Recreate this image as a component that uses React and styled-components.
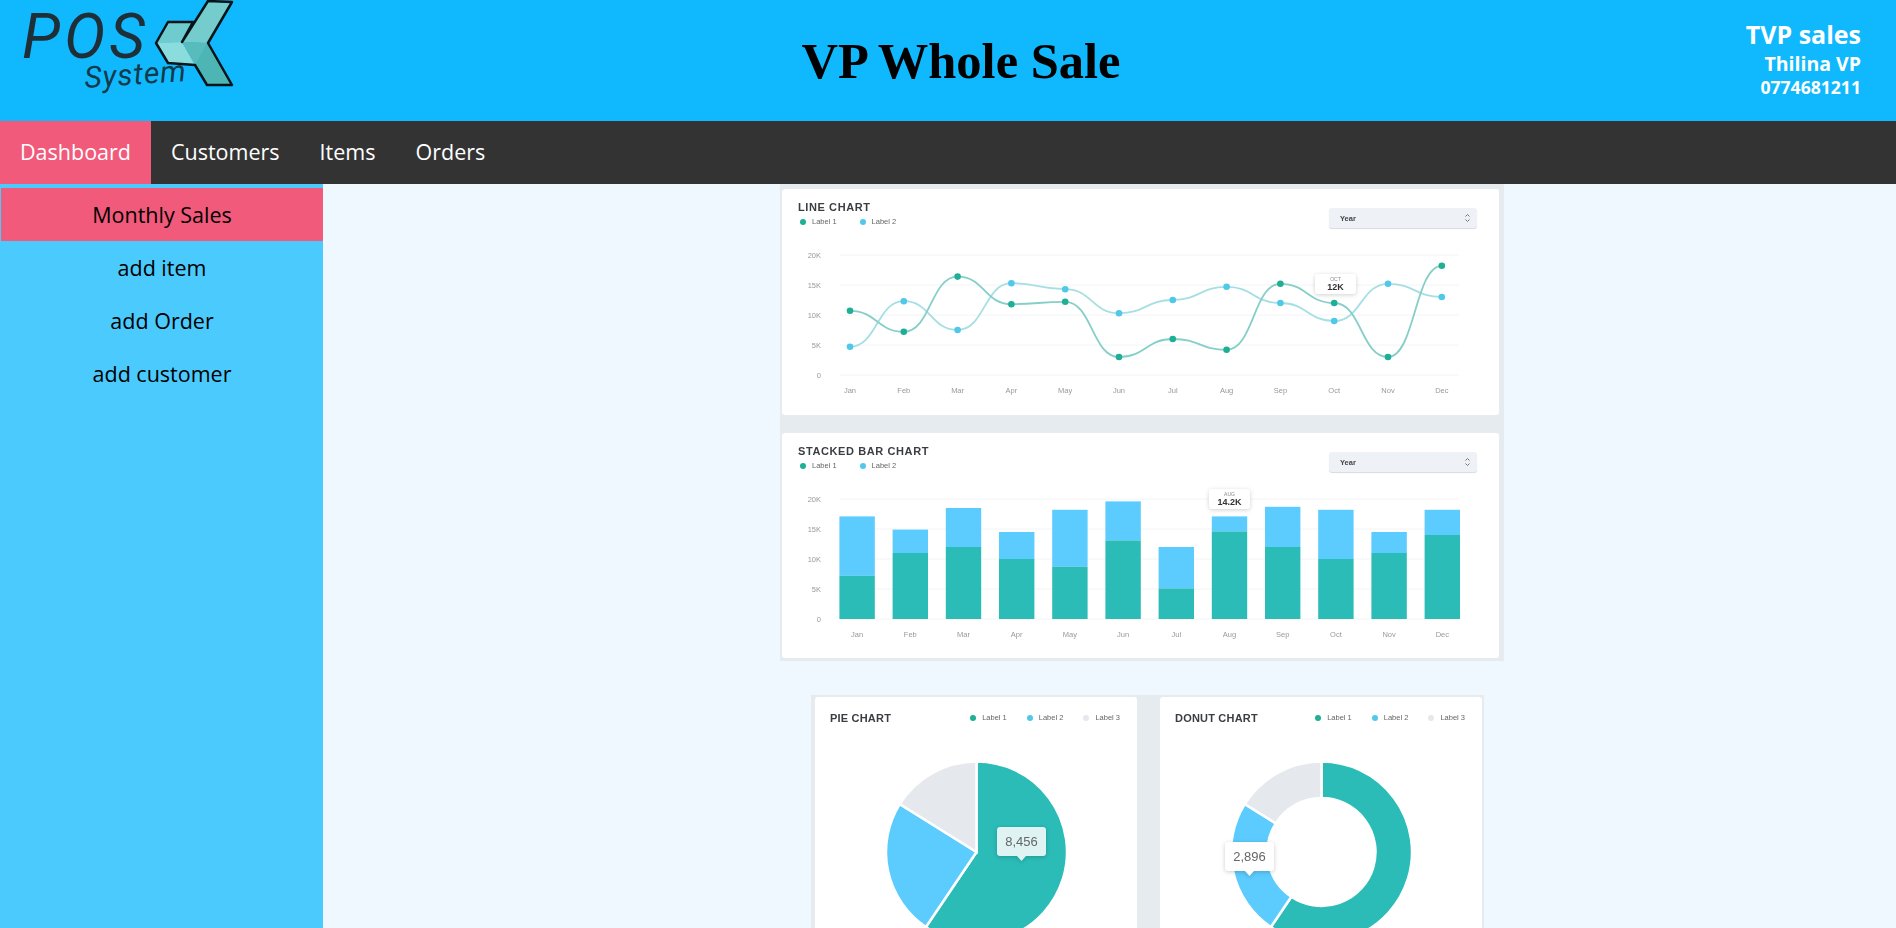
import React from 'react'
import styled, { createGlobalStyle } from 'styled-components'

const GlobalStyle = createGlobalStyle`
    html, body {
        margin: 0;
        height: 100%;
        overflow: hidden;
    }
    body {
        font-family: "Open Sans", "Noto Sans", sans-serif;
    }
`

const TEAL = '#2bbcb8'
const BLUE = '#5ccbfd'
const GREY = '#e5e8ec'
const DOT_TEAL = '#1fae96'
const DOT_BLUE = '#4fc8ea'
const MONTHS = ['Jan', 'Feb', 'Mar', 'Apr', 'May', 'Jun', 'Jul', 'Aug', 'Sep', 'Oct', 'Nov', 'Dec']
const TICKS = [0, 5, 10, 15, 20]

const lineOne = [10.7, 7.2, 16.4, 11.8, 12.2, 3, 6, 4.2, 15.2, 12, 3, 18.2]
const lineTwo = [4.7, 12.3, 7.5, 15.3, 14.3, 10.3, 12.5, 14.7, 12, 9, 15.2, 13]
const bars = [
    [7.2, 17.1], [11, 14.9], [12, 18.5], [10, 14.5], [8.7, 18.2], [13.1, 19.6],
    [5.1, 12], [14.6, 17.1], [12, 18.7], [10, 18.2], [11, 14.5], [14, 18.2],
]

const Page = styled.div`
    height: 100vh;
    display: flex;
    flex-direction: column;
    overflow: hidden;
`
const Header = styled.header`
    height: 121px;
    flex: none;
    background: #10b9fd;
    display: grid;
    grid-template-columns: 1fr auto 1fr;
    align-items: center;
`
const Logo = styled.svg`
    display: block;
    align-self: start;
`
const Title = styled.h1`
    margin: 0;
    padding-left: 26px;
    font-family: "Liberation Serif", serif;
    font-size: 50.5px;
    font-weight: 700;
    color: #000;
`
const Shop = styled.div`
    justify-self: end;
    padding: 0 35px 5px 0;
    color: #fff;
    font-weight: 700;
    text-align: right;
`
const ShopLine = styled.div`
    font-size: ${(p) => p.size}px;
    line-height: ${(p) => p.height}px;
`
const Nav = styled.nav`
    height: 63px;
    flex: none;
    background: #333;
    display: flex;
`
const NavItem = styled.a`
    display: flex;
    align-items: center;
    padding: 0 20px 2px;
    font-size: 21.5px;
    color: #fff;
    background: ${(p) => (p.$active ? '#f15a7b' : 'transparent')};
`
const Body = styled.div`
    flex: 1;
    min-height: 0;
    display: flex;
`
const Sidebar = styled.aside`
    width: 323px;
    flex: none;
    box-sizing: border-box;
    padding: 4px 0 0 1px;
    background: #4bcbfd;
`
const SideItem = styled.div`
    height: 53px;
    display: flex;
    align-items: center;
    justify-content: center;
    font-size: 21.5px;
    color: #000;
    background: ${(p) => (p.$active ? '#f15a7b' : 'transparent')};
`
const Main = styled.main`
    flex: 1;
    min-width: 0;
    padding-left: 457px;
    background: #f0f8ff;
    overflow: hidden;
`
const ChartStack = styled.div`
    width: 724px;
    box-sizing: border-box;
    padding: 5px 5px 3px 2px;
    display: flex;
    flex-direction: column;
    gap: 18px;
    background: #e6ebef;
`
const Card = styled.section`
    background: #fff;
    border-radius: 3px;
    height: ${(p) => p.height}px;
    overflow: hidden;
    filter: blur(0.6px);
`
const CardHead = styled.div`
    height: 51px;
    box-sizing: border-box;
    padding: 11px 22px 0 16px;
    display: flex;
    justify-content: space-between;
    align-items: flex-start;
`
const CardTitle = styled.div`
    font-family: "Liberation Sans", sans-serif;
    font-size: 11px;
    line-height: 14px;
    font-weight: 700;
    letter-spacing: ${(p) => (p.$wide ? '0.6px' : '0.2px')};
    color: #3a3d42;
`
const Legend = styled.div`
    display: flex;
    gap: ${(p) => p.gap}px;
    margin: ${(p) => p.top || 0}px 0 0 ${(p) => p.left || 0}px;
`
const LegendItem = styled.div`
    display: flex;
    align-items: center;
    gap: 6px;
    font-family: "Liberation Sans", sans-serif;
    font-size: 7.5px;
    line-height: 10px;
    color: #666;
`
const Dot = styled.i`
    width: 6px;
    height: 6px;
    border-radius: 50%;
    background: ${(p) => p.color};
`
const Select = styled.div`
    width: 148px;
    height: 20px;
    box-sizing: border-box;
    margin-top: 8px;
    padding: 0 7px 0 11px;
    display: flex;
    align-items: center;
    justify-content: space-between;
    background: #eef1f5;
    border-radius: 3px;
    box-shadow: 0 1px 1px #d5dade;
    font-family: "Liberation Sans", sans-serif;
    font-size: 7.5px;
    font-weight: 700;
    color: #444;
`
const Chevrons = styled.svg`
    display: block;
`
const ChartSvg = styled.svg`
    display: block;
    font-family: "Liberation Sans", sans-serif;
`
const PieRow = styled.div`
    width: 673px;
    box-sizing: border-box;
    margin: 34px 0 0 31px;
    padding: 2px 2px 0 4px;
    display: grid;
    grid-template-columns: 322px 322px;
    gap: 23px;
    background: #e6ebef;
`
const PieHead = styled.div`
    height: 45px;
    box-sizing: border-box;
    padding: 14px 17px 0 15px;
    display: flex;
    justify-content: space-between;
    align-items: flex-start;
`

const smoothPath = (pts) =>
    pts.reduce((d, [x, y], i) => {
        if (i === 0) return `M${x} ${y}`
        const [px, py] = pts[i - 1]
        const mid = (px + x) / 2
        return `${d} C${mid} ${py} ${mid} ${y} ${x} ${y}`
    }, '')

const polar = (cx, cy, r, deg) => {
    const a = ((deg - 90) * Math.PI) / 180
    return [cx + r * Math.cos(a), cy + r * Math.sin(a)]
}

const slicePath = (cx, cy, r, inner, from, to) => {
    const large = to - from > 180 ? 1 : 0
    const [x1, y1] = polar(cx, cy, r, from)
    const [x2, y2] = polar(cx, cy, r, to)
    if (!inner) return `M${cx} ${cy} L${x1} ${y1} A${r} ${r} 0 ${large} 1 ${x2} ${y2} Z`
    const [x3, y3] = polar(cx, cy, inner, to)
    const [x4, y4] = polar(cx, cy, inner, from)
    return `M${x1} ${y1} A${r} ${r} 0 ${large} 1 ${x2} ${y2} L${x3} ${y3} A${inner} ${inner} 0 ${large} 0 ${x4} ${y4} Z`
}

const Axis = ({ monthX }) => (
    <>
        {TICKS.map((t) => (
            <g key={t}>
                <line x1="58" x2="677" y1={135 - t * 6} y2={135 - t * 6} stroke="#f3f4f6" />
                <text x="39" y={138 - t * 6} fontSize="7.5" fill="#999" textAnchor="end">
                    {t === 0 ? '0' : `${t}K`}
                </text>
            </g>
        ))}
        {MONTHS.map((m, i) => (
            <text key={m} x={monthX(i)} y="153" fontSize="7.5" fill="#999" textAnchor="middle">
                {m}
            </text>
        ))}
    </>
)

const Tip = ({ x, y, small, big }) => (
    <g style={{ filter: 'drop-shadow(0 1px 2px rgba(0,0,0,.18))' }}>
        <rect x={x} y={y} width="41" height="20" rx="3" fill="#fff" />
        <text x={x + 20.5} y={y + 7} fontSize="5" fill="#888" textAnchor="middle">{small}</text>
        <text x={x + 20.5} y={y + 15.5} fontSize="9" fontWeight="700" fill="#333" textAnchor="middle">{big}</text>
    </g>
)

const LineChart = () => {
    const x = (i) => 68 + i * 53.8
    const toPts = (vals) => vals.map((v, i) => [x(i), 135 - v * 6])
    return (
        <ChartSvg width="717" height="175" viewBox="0 0 717 175">
            <Axis monthX={x} />
            <path d={smoothPath(toPts(lineTwo))} fill="none" stroke="#a6dfe3" strokeWidth="1.8" />
            <path d={smoothPath(toPts(lineOne))} fill="none" stroke="#86cfc8" strokeWidth="1.8" />
            {toPts(lineTwo).map(([px, py]) => <circle key={px} cx={px} cy={py} r="3.3" fill={DOT_BLUE} />)}
            {toPts(lineOne).map(([px, py]) => <circle key={px} cx={px} cy={py} r="3.3" fill={DOT_TEAL} />)}
            <Tip x={533} y={34} small="OCT" big="12K" />
        </ChartSvg>
    )
}

const BarChart = () => {
    const x = (i) => 57.4 + i * 53.2
    return (
        <ChartSvg width="717" height="174" viewBox="0 0 717 174">
            <Axis monthX={(i) => x(i) + 17.7} />
            {bars.map(([low, top], i) => (
                <g key={i}>
                    <rect x={x(i)} y={135 - top * 6} width="35.4" height={(top - low) * 6} fill={BLUE} />
                    <rect x={x(i)} y={135 - low * 6} width="35.4" height={low * 6} fill={TEAL} />
                </g>
            ))}
            <Tip x={427} y={5} small="AUG" big="14.2K" />
        </ChartSvg>
    )
}

const RoundChart = ({ inner, tip, tipFill }) => {
    const slices = [
        [0, 214, TEAL],
        [214, 302, BLUE],
        [302, 360, GREY],
    ]
    return (
        <ChartSvg width="322" height="260" viewBox="0 0 322 260">
            {slices.map(([from, to, color]) => (
                <path
                    key={from}
                    d={slicePath(161.5, 110, 90.5, inner, from, to)}
                    fill={color}
                    stroke="#fff"
                    strokeWidth="2.5"
                />
            ))}
            <g style={{ filter: 'drop-shadow(0 1px 2px rgba(0,0,0,.2))' }}>
                <rect x={tip.x} y={tip.y} width="49" height="29" rx="3" fill={tipFill} />
                <path d={`M${tip.x + 20} ${tip.y + 29} h9 l-4.5 5 Z`} fill={tipFill} />
            </g>
            <text x={tip.x + 24.5} y={tip.y + 19} fontSize="13" fill="#666" textAnchor="middle">
                {tip.label}
            </text>
        </ChartSvg>
    )
}

const LegendRow = ({ labels, gap, top, left }) => {
    const colors = [DOT_TEAL, DOT_BLUE, GREY]
    return (
        <Legend gap={gap} top={top} left={left}>
            {labels.map((l, i) => (
                <LegendItem key={l}>
                    <Dot color={colors[i]} />
                    {l}
                </LegendItem>
            ))}
        </Legend>
    )
}

const YearSelect = () => (
    <Select>
        Year
        <Chevrons width="5" height="10" viewBox="0 0 5 10">
            <path d="M0.5 3.5 L2.5 1.5 L4.5 3.5 M0.5 6.5 L2.5 8.5 L4.5 6.5" fill="none" stroke="#777" />
        </Chevrons>
    </Select>
)

const crystal = 'M208 1 L232 2 L208 43 L232 85 L207 85 L195 65 L168 63 L156 43 L168 22 L193 22 L182 42 Z'

const PosLogo = () => (
    <Logo width="250" height="100" viewBox="0 0 250 100">
        <text
            x="22"
            y="58"
            fontFamily="Roboto, sans-serif"
            fontStyle="italic"
            fontWeight="400"
            fontSize="62"
            letterSpacing="4"
            fill="#1f2f38"
        >
            POS
        </text>
        <text
            x="85"
            y="88"
            transform="rotate(-4 85 88)"
            fontFamily="Roboto, sans-serif"
            fontStyle="italic"
            fontSize="30"
            letterSpacing="1"
            fill="#123a4a"
        >
            System
        </text>
        <path d="M208 1 L232 2 L208 43 L182 42 Z" fill="#74cccc" />
        <path d="M156 43 L168 22 L193 22 L182 42 Z" fill="#6ecbce" />
        <path d="M156 43 L182 42 L195 65 L168 63 Z" fill="#8bdcdc" />
        <path d="M182 42 L208 43 L195 65 Z" fill="#58bcbc" />
        <path d="M208 43 L232 85 L207 85 L195 65 Z" fill="#4db5b3" />
        <path d={crystal} fill="none" stroke="#06141a" strokeWidth="2.5" strokeLinejoin="round" />
    </Logo>
)

const App = () => (
    <Page>
        <GlobalStyle />
        <Header>
            <PosLogo />
            <Title>VP Whole Sale</Title>
            <Shop>
                <ShopLine size={25} height={34}>TVP sales</ShopLine>
                <ShopLine size={19.5} height={25}>Thilina VP</ShopLine>
                <ShopLine size={17.6} height={23}>0774681211</ShopLine>
            </Shop>
        </Header>
        <Nav>
            <NavItem $active>Dashboard</NavItem>
            <NavItem>Customers</NavItem>
            <NavItem>Items</NavItem>
            <NavItem>Orders</NavItem>
        </Nav>
        <Body>
            <Sidebar>
                <SideItem $active>Monthly Sales</SideItem>
                <SideItem>add item</SideItem>
                <SideItem>add Order</SideItem>
                <SideItem>add customer</SideItem>
            </Sidebar>
            <Main>
                <ChartStack>
                    <Card height={226}>
                        <CardHead>
                            <div>
                                <CardTitle $wide>LINE CHART</CardTitle>
                                <LegendRow labels={['Label 1', 'Label 2']} gap={23} top={3} left={2} />
                            </div>
                            <YearSelect />
                        </CardHead>
                        <LineChart />
                    </Card>
                    <Card height={225}>
                        <CardHead>
                            <div>
                                <CardTitle $wide>STACKED BAR CHART</CardTitle>
                                <LegendRow labels={['Label 1', 'Label 2']} gap={23} top={3} left={2} />
                            </div>
                            <YearSelect />
                        </CardHead>
                        <BarChart />
                    </Card>
                </ChartStack>
                <PieRow>
                    <Card height={300}>
                        <PieHead>
                            <CardTitle>PIE CHART</CardTitle>
                            <LegendRow labels={['Label 1', 'Label 2', 'Label 3']} gap={20} top={2} />
                        </PieHead>
                        <RoundChart tip={{ x: 182, y: 85, label: '8,456' }} tipFill="#dff3f3" />
                    </Card>
                    <Card height={300}>
                        <PieHead>
                            <CardTitle>DONUT CHART</CardTitle>
                            <LegendRow labels={['Label 1', 'Label 2', 'Label 3']} gap={20} top={2} />
                        </PieHead>
                        <RoundChart inner={54} tip={{ x: 65, y: 100, label: '2,896' }} tipFill="#fff" />
                    </Card>
                </PieRow>
            </Main>
        </Body>
    </Page>
)

export default App
